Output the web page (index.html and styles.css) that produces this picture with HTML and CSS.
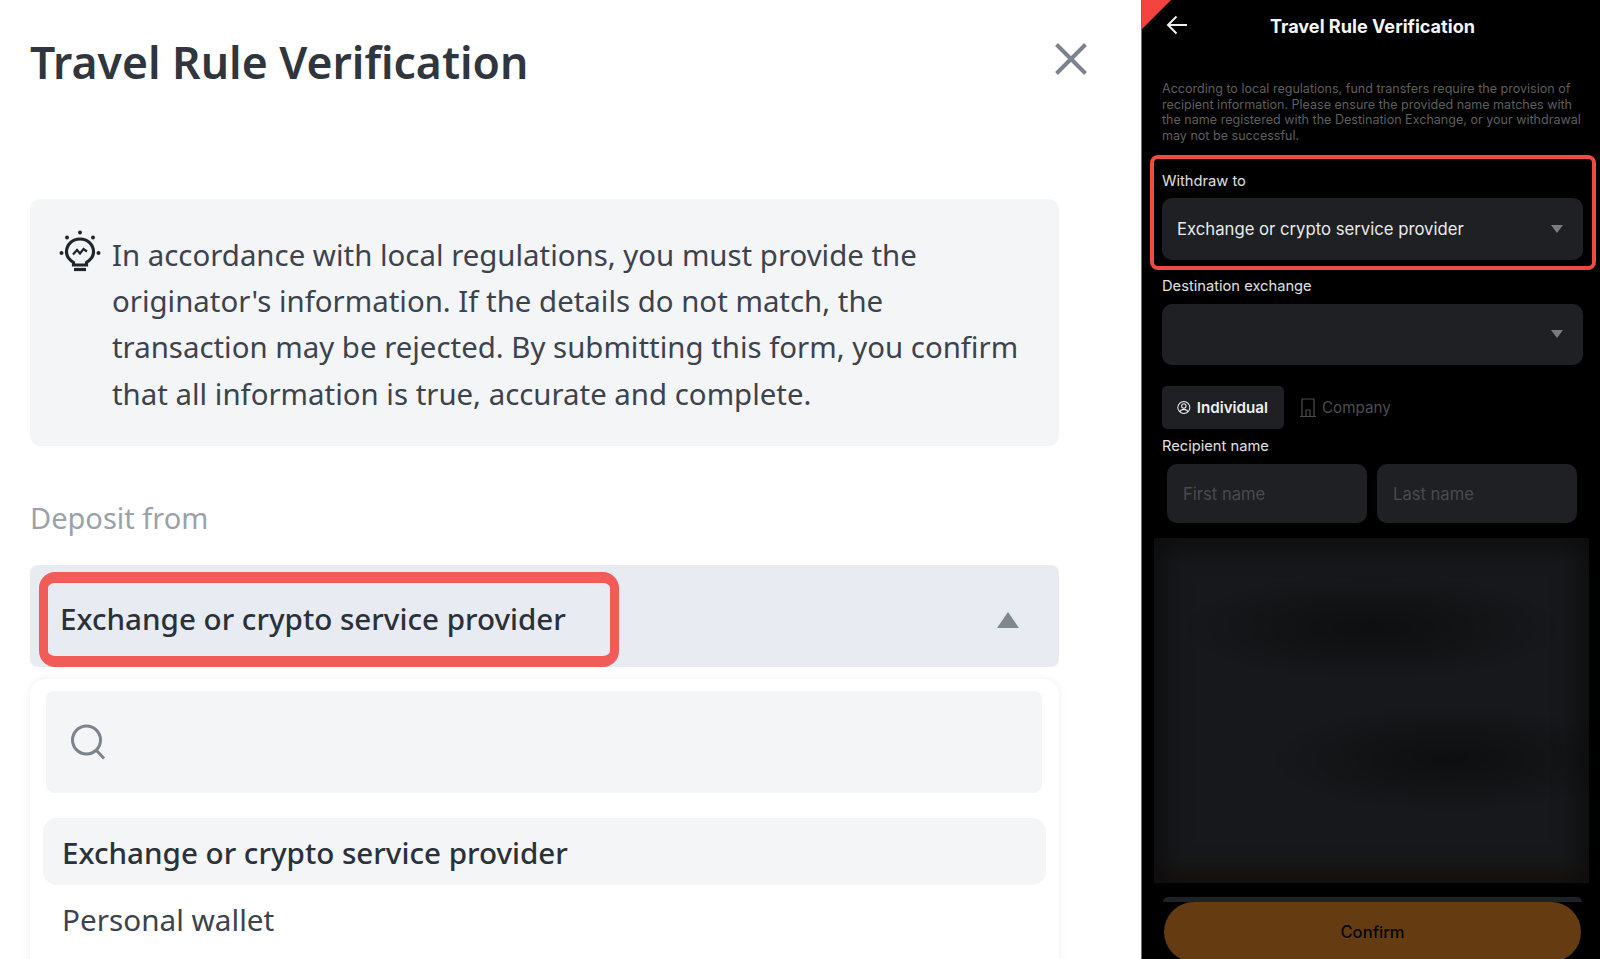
FILE: index.html
```html
<!DOCTYPE html>
<html lang="en">
<head>
  <meta charset="UTF-8">
  <title>Travel Rule Verification</title>
  <link rel="stylesheet" href="styles.css">
</head>
<body>
  <div class="page">
    <section class="web-panel">
      <div class="title-row">
        <h1>Travel Rule Verification</h1>
        <svg class="close-icon" width="32" height="32" viewBox="0 0 32 32"><path d="M1.5 1.5L30.5 30.5M30.5 1.5L1.5 30.5"/></svg>
      </div>

      <div class="notice">
        <svg class="bulb-icon" width="42" height="42" viewBox="0 0 42 42">
          <circle cx="21" cy="2.5" r="2"/>
          <circle cx="8" cy="7.5" r="2"/>
          <circle cx="34" cy="7.5" r="2"/>
          <circle cx="2.5" cy="23" r="2"/>
          <circle cx="39.5" cy="23" r="2"/>
          <path class="bulb-line" d="M14.5 35V32.5C10 29.5 7.5 26.5 7.5 22C7.5 14.5 13.5 9 21 9S34.5 14.5 34.5 22C34.5 26.5 32 29.5 27.5 32.5V35Z"/>
          <path class="bulb-line thin" d="M14 24.5L18 20L21 23.5L24.5 19L28 21.5"/>
          <path class="bulb-line" d="M15 39.5H27"/>
        </svg>
        <p>In accordance with local regulations, you must provide the originator's information. If the details do not match, the transaction may be rejected. By submitting this form, you confirm that all information is true, accurate and complete.</p>
      </div>

      <div class="deposit-label">Deposit from</div>
      <div class="deposit-select">
        <div class="marked-value">Exchange or crypto service provider</div>
        <span class="caret-up"></span>
      </div>

      <div class="dropdown">
        <div class="search-box">
          <svg width="40" height="40" viewBox="0 0 40 40"><circle cx="18.5" cy="18" r="14"/><path d="M28.5 28.5L36 36.5"/></svg>
        </div>
        <div class="option active">Exchange or crypto service provider</div>
        <div class="option">Personal wallet</div>
      </div>
    </section>

    <section class="app-panel">
      <span class="corner"></span>
      <div class="app-header">
        <svg class="back-icon" width="22" height="20" viewBox="0 0 22 20"><path d="M21 10H2M10.5 1.5L2 10L10.5 18.5"/></svg>
        <h2>Travel Rule Verification</h2>
      </div>

      <p class="intro">According to local regulations, fund transfers require the provision of recipient information. Please ensure the provided name matches with the name registered with the Destination Exchange, or your withdrawal may not be successful.</p>

      <div class="marked-field">
        <label>Withdraw to</label>
        <div class="app-select">
          <span>Exchange or crypto service provider</span>
          <span class="caret-down"></span>
        </div>
      </div>

      <label class="dest-label">Destination exchange</label>
      <div class="app-select short">
        <span></span>
        <span class="caret-down"></span>
      </div>

      <div class="tabs">
        <div class="tab selected">
          <svg width="17" height="17" viewBox="0 0 16 16"><circle cx="8" cy="8" r="7"/><circle cx="8" cy="6.3" r="2.6"/><path d="M3.2 13C4.2 10.8 6 10.2 8 10.2S11.8 10.8 12.8 13"/></svg>
          Individual
        </div>
        <div class="tab">
          <svg width="16" height="19" viewBox="0 0 16 19"><path d="M0 18.5H16M2 18.5V1H14V18.5M6 18.5V12H10V18.5"/></svg>
          Company
        </div>
      </div>

      <label class="name-label">Recipient name</label>
      <div class="name-row">
        <div class="name-input">First name</div>
        <div class="name-input">Last name</div>
      </div>

      <div class="blurred"></div>

      <div class="under-bar"></div>
      <div class="confirm">Confirm</div>
    </section>
  </div>
</body>
</html>
```

FILE: styles.css
```css
* {
  box-sizing: border-box;
}

html, body {
  margin: 0;
  height: 959px;
  overflow: hidden;
}

.page {
  display: flex;
  height: 959px;
}

/* left side, web form */
.web-panel {
  width: 1141px;
  padding: 0 82px 0 30px;
  background: #fff;
  color: #2b3139;
  font-family: "Noto Sans", sans-serif;
}

.title-row {
  display: flex;
  justify-content: space-between;
  align-items: flex-start;
  padding-top: 36px;
  margin-right: -28px;
}

h1 {
  margin: 0;
  font-size: 44.5px;
  line-height: 52px;
  font-weight: 600;
  color: #30363d;
}

.close-icon {
  margin-top: 7px;
}

.close-icon path {
  fill: none;
  stroke: #7c838e;
  stroke-width: 4;
}

.notice {
  display: flex;
  gap: 10px;
  margin-top: 111px;
  height: 247px;
  padding: 33px 30px 30px 30px;
  background: #f4f5f7;
  border-radius: 10px;
}

.bulb-icon {
  flex: none;
  margin-top: -2px;
  margin-left: -1px;
  margin-right: 1px;
  fill: #20262d;
}

.bulb-line {
  fill: none;
  stroke: #20262d;
  stroke-width: 3.2;
}

.bulb-line.thin {
  stroke-width: 2.2;
}

.notice p {
  margin: 0;
  font-size: 29.4px;
  line-height: 46.2px;
  color: #3c434c;
}

.deposit-label {
  margin-top: 52px;
  font-size: 29px;
  line-height: 40px;
  color: #9aa1ab;
}

.deposit-select {
  display: flex;
  align-items: flex-start;
  justify-content: space-between;
  height: 102px;
  margin-top: 27px;
  padding: 7px 40px 0 9px;
  background: #e8ebf2;
  border-radius: 8px;
}

.marked-value {
  width: 580px;
  height: 95px;
  padding-left: 12px;
  border-style: solid;
  border-color: #f25c58;
  border-width: 11px 9px;
  border-radius: 16px;
  font-size: 29.6px;
  font-weight: 500;
  line-height: 71px;
  color: #2b3139;
}

.caret-up {
  width: 0;
  height: 0;
  margin-top: 40px;
  border-left: 11px solid transparent;
  border-right: 11px solid transparent;
  border-bottom: 16px solid #7f8791;
}

.dropdown {
  height: 300px;
  margin-top: 12px;
  padding: 12px 17px 0 16px;
  background: #fff;
  border-radius: 16px;
  box-shadow: 0 0 8px rgba(30, 35, 45, 0.08);
}

.search-box {
  display: flex;
  align-items: center;
  height: 102px;
  padding-left: 22px;
  background: #f4f5f7;
  border-radius: 8px;
}

.search-box svg {
  fill: none;
  stroke: #7c838e;
  stroke-width: 3;
}

.option {
  height: 67px;
  margin: 0 -4px 0 -3px;
  padding-left: 19px;
  font-size: 29.7px;
  line-height: 69px;
  color: #3c434c;
}

.option.active {
  margin-top: 25px;
  background: #f4f5f7;
  border-radius: 14px;
  font-weight: 500;
  font-size: 29.6px;
  color: #2b3139;
}

/* right side, phone screen */
.app-panel {
  position: relative;
  width: 459px;
  padding: 0 17px 0 20px;
  background: #000;
  border-left: 1px solid #6f6f6f;
  color: #e6e6e6;
  font-family: Inter, sans-serif;
}

.corner {
  position: absolute;
  top: 0;
  left: 0;
  width: 29px;
  height: 29px;
  background: #f5443f;
  clip-path: polygon(0 0, 100% 0, 0 100%);
}

.app-header {
  display: flex;
  align-items: center;
  justify-content: center;
  position: relative;
  height: 52px;
}

.back-icon {
  position: absolute;
  left: 4px;
  top: 15px;
  fill: none;
  stroke: #f0f0f0;
  stroke-width: 2;
}

h2 {
  margin: 0;
  font-size: 18.1px;
  font-weight: 700;
  color: #f5f5f5;
}

.intro {
  margin: 29px 0 0;
  font-size: 12.55px;
  line-height: 15.5px;
  color: #5f5f5f;
}

label {
  display: block;
  font-size: 14.7px;
  line-height: 18px;
  color: #e0e0e0;
}

.marked-field {
  margin: 11.6px -13px 0 -12px;
  padding: 13px 9px 6px 8px;
  border: 4px solid #f04a45;
  border-radius: 8px;
}

.app-select {
  display: flex;
  align-items: center;
  justify-content: space-between;
  height: 62px;
  margin-top: 8px;
  padding: 0 20px 0 15px;
  background: #1e2024;
  border-radius: 10px;
  font-size: 16.7px;
  color: #ebebeb;
}

.app-select.short {
  height: 61px;
  margin-top: 9px;
}

.caret-down {
  width: 0;
  height: 0;
  border-left: 6px solid transparent;
  border-right: 6px solid transparent;
  border-top: 8px solid #7c7c7e;
}

.dest-label {
  margin-top: 7px;
}

.tabs {
  display: flex;
  margin-top: 21px;
}

.tab {
  display: flex;
  align-items: center;
  gap: 6px;
  height: 43px;
  padding: 1px 16px 0;
  border-radius: 5px;
  font-size: 15.2px;
  color: #4d4d4f;
}

.tab svg {
  fill: none;
  stroke: currentColor;
  stroke-width: 1.2;
}

.tab.selected {
  width: 122px;
  padding-left: 15px;
  background: #1e2024;
  font-weight: 600;
  color: #f0f0f0;
}

.name-label {
  margin-top: 8px;
}

.name-row {
  display: flex;
  gap: 10px;
  margin: 9px 6px 0 5px;
}

.name-input {
  flex: 1;
  height: 59px;
  padding-left: 16px;
  background: #1e2024;
  border-radius: 10px;
  font-size: 16.6px;
  line-height: 61px;
  color: #4a4b4e;
}

.blurred {
  height: 345px;
  margin: 15px -6px 0 -8px;
  background:
    linear-gradient(to top, rgba(48, 24, 4, 0.3), rgba(0, 0, 0, 0) 8%),
    radial-gradient(ellipse 45% 16% at 50% 26%, rgba(0, 0, 0, 0.4), rgba(0, 0, 0, 0)),
    radial-gradient(ellipse 42% 16% at 68% 64%, rgba(0, 0, 0, 0.4), rgba(0, 0, 0, 0)),
    #17181b;
  box-shadow: inset 0 0 26px 8px rgba(0, 0, 0, 0.5);
}

.under-bar {
  height: 5px;
  margin: 14px 1px 0 1px;
  background: #1e2126;
  border-radius: 6px 6px 0 0;
}

.confirm {
  height: 60px;
  margin: 0 2px;
  background: #653c11;
  border-radius: 30px;
  font-size: 16.6px;
  font-weight: 500;
  line-height: 60px;
  text-align: center;
  color: #060606;
}
```
